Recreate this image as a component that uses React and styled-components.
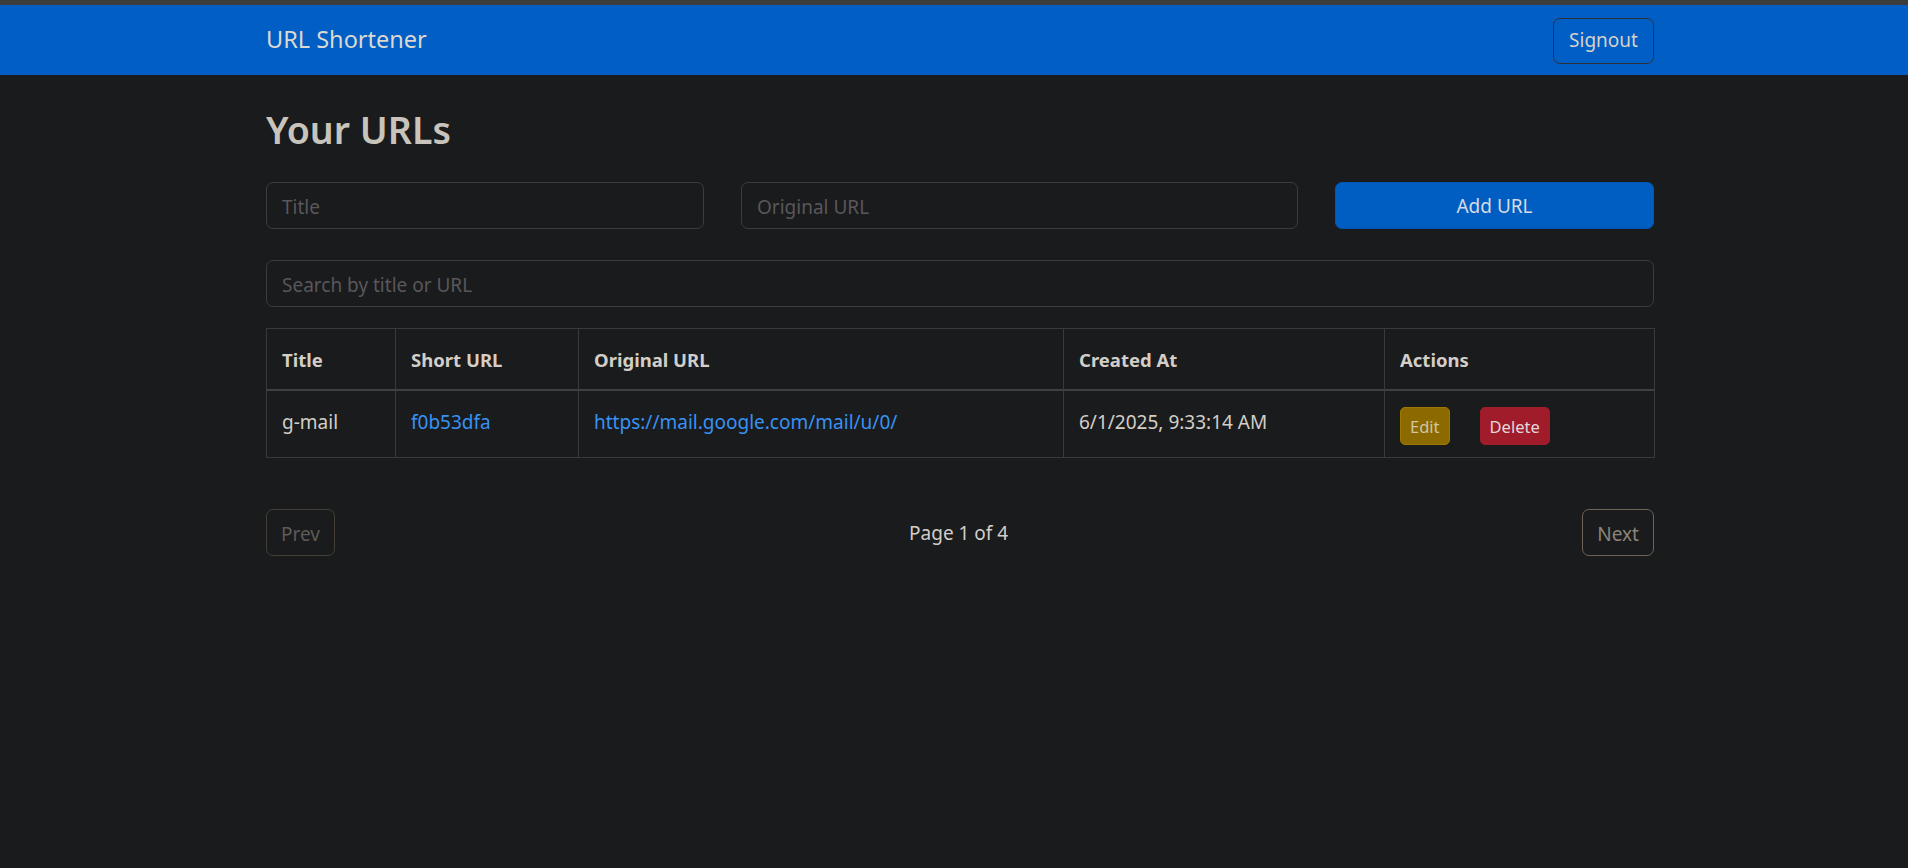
import styled, { createGlobalStyle } from 'styled-components';

const columns = [
  { label: 'Title', width: 129 },
  { label: 'Short URL', width: 183 },
  { label: 'Original URL', width: 485 },
  { label: 'Created At', width: 321 },
  { label: 'Actions', width: 270 },
];

const rows = [
  {
    title: 'g-mail',
    short: 'f0b53dfa',
    original: 'https://mail.google.com/mail/u/0/',
    createdAt: '6/1/2025, 9:33:14 AM',
  },
];

export default function App() {
  return (
    <>
      <GlobalStyle />
      <TopStrip />
      <Navbar>
        <NavInner>
          <Brand>URL Shortener</Brand>
          <SignoutButton>Signout</SignoutButton>
        </NavInner>
      </Navbar>
      <Container>
        <Heading>Your URLs</Heading>
        <FormRow>
          <Input placeholder='Title' />
          <Input placeholder='Original URL' />
          <AddButton>Add URL</AddButton>
        </FormRow>
        <SearchInput placeholder='Search by title or URL' />
        <Table>
          <colgroup>
            {columns.map((c) => (
              <Col key={c.label} $width={c.width} />
            ))}
          </colgroup>
          <thead>
            <tr>
              {columns.map((c) => (
                <Th key={c.label}>{c.label}</Th>
              ))}
            </tr>
          </thead>
          <tbody>
            {rows.map((row) => (
              <tr key={row.short}>
                <Td>{row.title}</Td>
                <Td>
                  <Link href='#'>{row.short}</Link>
                </Td>
                <Td>
                  <Link href='#'>{row.original}</Link>
                </Td>
                <Td>{row.createdAt}</Td>
                <Td>
                  <Actions>
                    <SmallButton $variant='edit'>Edit</SmallButton>
                    <SmallButton $variant='delete'>Delete</SmallButton>
                  </Actions>
                </Td>
              </tr>
            ))}
          </tbody>
        </Table>
        <Pagination>
          <PageButton disabled>Prev</PageButton>
          <PageInfo>Page 1 of 4</PageInfo>
          <PageButton>Next</PageButton>
        </Pagination>
      </Container>
    </>
  );
}

const GlobalStyle = createGlobalStyle`
  html, body {
    margin: 0;
    padding: 0;
    background: #1a1b1d;
    min-height: 100%;
  }
  body {
    font-family: 'Noto Sans', 'Open Sans', sans-serif;
    font-size: 19px;
    line-height: 1.5;
    color: #d3cec7;
  }
  * {
    box-sizing: border-box;
  }
`;

const TopStrip = styled.div`
  height: 5px;
  background: #3c3c3c;
`;

const Navbar = styled.nav`
  height: 70px;
  background: #005ec4;
  display: flex;
  align-items: center;
`;

const NavInner = styled.div`
  width: 1388px;
  margin-left: 266px;
  display: flex;
  align-items: center;
  justify-content: space-between;
`;

const Brand = styled.div`
  font-size: 23.5px;
  color: #dcd8d2;
  line-height: 1.5;
`;

const SignoutButton = styled.button`
  font-family: inherit;
  font-size: 19px;
  line-height: 1.5;
  color: #d6d2cb;
  background: transparent;
  border: 1px solid #2d3137;
  border-radius: 7px;
  height: 46px;
  width: 101px;
  padding: 0;
  margin-top: 1px;
`;

const Container = styled.main`
  width: 1388px;
  margin-left: 266px;
  padding-top: 32px;
`;

const Heading = styled.h2`
  margin: 0 0 30px;
  font-size: 37.5px;
  font-weight: 600;
  line-height: 1.2;
  color: #c9c4bb;
`;

const FormRow = styled.div`
  display: grid;
  grid-template-columns: 438px 557px 1fr;
  column-gap: 37px;
  margin-bottom: 31px;
`;

const Input = styled.input`
  height: 47px;
  padding: 7px 15px 5px;
  font-family: inherit;
  font-size: 19px;
  color: #d3cec7;
  background: #1a1b1d;
  border: 1px solid #3a3d40;
  border-radius: 7px;
  outline: none;

  &::placeholder {
    color: #59575a;
  }
`;

const SearchInput = styled(Input)`
  display: block;
  width: 100%;
  margin-bottom: 21px;
`;

const AddButton = styled.button`
  height: 47px;
  padding-top: 2px;
  font-family: inherit;
  font-size: 19px;
  color: #d6dbe3;
  background: #005ec2;
  border: 1px solid #0057b3;
  border-radius: 7px;
`;

const Table = styled.table`
  width: 100%;
  table-layout: fixed;
  border-collapse: collapse;
  border: 1px solid #383b3e;
`;

const Col = styled.col`
  width: ${(p) => p.$width}px;
`;

const Th = styled.th`
  text-align: left;
  font-weight: 700;
  font-size: 18.5px;
  color: #d3cec7;
  padding: 16px 15px 14px;
  border-left: 1px solid #383b3e;
  border-bottom: 2px solid #3c4143;
  line-height: 30px;
`;

const Td = styled.td`
  font-size: 19px;
  padding: 16px 15px 12px;
  border-left: 1px solid #383b3e;
  line-height: 30px;
  vertical-align: top;
  white-space: nowrap;
`;

const Link = styled.a`
  color: #3892f3;
  text-decoration: none;
`;

const Actions = styled.div`
  display: flex;
  gap: 30px;
`;

const buttonVariants = {
  edit: 'background: #8c6a00; border-color: #9e7800; color: #cfc6a8;',
  delete: 'background: #a01c2b; border-color: #a01c2b; color: #e2d8da;',
};

const SmallButton = styled.button`
  height: 38px;
  padding: 1px 9px 0;
  font-family: inherit;
  font-size: 16.5px;
  border: 1px solid;
  border-radius: 5px;
  ${(p) => buttonVariants[p.$variant]}
`;

const Pagination = styled.div`
  margin-top: 51px;
  display: flex;
  align-items: center;
  justify-content: space-between;
`;

const PageButton = styled.button`
  height: 47px;
  padding: 2px 14px 0;
  font-family: inherit;
  font-size: 19px;
  background: transparent;
  border: 1px solid #6c6455;
  border-radius: 7px;
  color: #8b8579;

  &:disabled {
    border-color: #433f38;
    color: #5e5a55;
  }
`;

const PageInfo = styled.div`
  font-size: 19px;
  color: #d3cec7;
  padding-top: 2px;
`;
